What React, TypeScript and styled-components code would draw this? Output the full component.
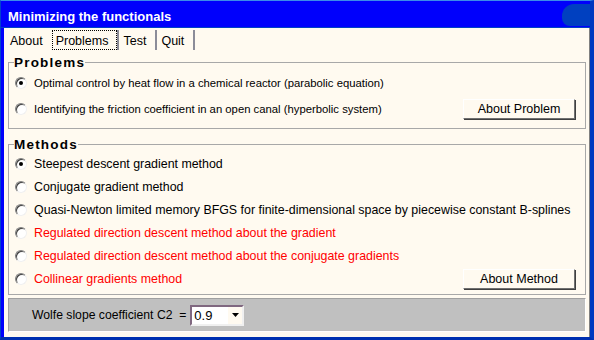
import styled, { createGlobalStyle } from 'styled-components'

const GlobalStyle = createGlobalStyle`
    body {
        margin: 0;
        font-family: "Liberation Sans", Arial, sans-serif;
        font-size: 12px;
    }
`

const problems = [
    { text: 'Optimal control by heat flow in a chemical reactor (parabolic equation)', checked: true },
    { text: 'Identifying the friction coefficient in an open canal (hyperbolic system)', checked: false },
]

const methods = [
    { text: 'Steepest descent gradient method', checked: true, red: false },
    { text: 'Conjugate gradient method', checked: false, red: false },
    { text: 'Quasi-Newton limited memory BFGS for finite-dimensional space by piecewise constant B-splines', checked: false, red: false },
    { text: 'Regulated direction descent method about the gradient', checked: false, red: true },
    { text: 'Regulated direction descent method about the conjugate gradients', checked: false, red: true },
    { text: 'Collinear gradients method', checked: false, red: true },
]

export default function App() {
    return (
        <>
            <GlobalStyle />
            <Window>
                <TitleBar>
                    <Title>Minimizing the functionals</Title>
                    <TitleCorner />
                </TitleBar>
                <Client>
                    <TabBar>
                        <Tab $first><TabLabel>About</TabLabel></Tab>
                        <Tab><TabLabel $active>Problems</TabLabel></Tab>
                        <Tab><TabLabel>Test</TabLabel></Tab>
                        <Tab><TabLabel>Quit</TabLabel></Tab>
                    </TabBar>

                    <Group $height={74}>
                        <Legend>Problems</Legend>
                        <Rows $gap={9.5} $size={11.3} $top={4}>
                            {problems.map((p, i) => (
                                <Row key={i}>
                                    <Radio $checked={p.checked} />
                                    <Label>{p.text}</Label>
                                    {i === problems.length - 1 && <Button>About Problem</Button>}
                                </Row>
                            ))}
                        </Rows>
                    </Group>

                    <Group $height={158}>
                        <Legend>Methods</Legend>
                        <Rows $gap={6.2} $size={12.4} $top={3}>
                            {methods.map((m, i) => (
                                <Row key={i}>
                                    <Radio $checked={m.checked} />
                                    <Label $red={m.red}>{m.text}</Label>
                                    {i === methods.length - 1 && <Button>About Method</Button>}
                                </Row>
                            ))}
                        </Rows>
                    </Group>

                    <Bottom>
                        <span>Wolfe slope coefficient C2&nbsp;&nbsp;=</span>
                        <Select>
                            <SelectValue>0.9</SelectValue>
                            <Arrow>
                                <svg width="7" height="4" viewBox="0 0 7 4">
                                    <path d="M0 0h7L3.5 4z" fill="#000" />
                                </svg>
                            </Arrow>
                        </Select>
                    </Bottom>
                </Client>
            </Window>
        </>
    )
}

const Window = styled.div`
    width: 594px;
    height: 340px;
    box-sizing: border-box;
    background: #0000fc;
    border-top: 1px solid #3c8ce8;
    border-left: 1px solid #0040d0;
    border-right: 4px solid #0038c0;
    border-bottom: 3px solid #0030b0;
    display: flex;
    flex-direction: column;
    overflow: hidden;
`

const TitleBar = styled.div`
    height: 27px;
    flex-shrink: 0;
    display: flex;
    align-items: center;
    justify-content: space-between;
    border-bottom: 1px solid #0040c8;
    box-sizing: border-box;
    padding-left: 7px;
`

const Title = styled.div`
    color: #fff;
    font-family: "Liberation Sans", Arial, sans-serif;
    font-weight: bold;
    font-size: 13px;
    padding-top: 4px;
`

const TitleCorner = styled.div`
    width: 28px;
    height: 22px;
    background: #0040c0;
    border-radius: 12px 0 0 8px;
    margin-top: 2px;
`

const Client = styled.div`
    flex: 1;
    margin-left: 3px;
    background: #fffaf0;
    border-right: 1px solid #808080;
    padding: 2px 3px 3px 4px;
    display: flex;
    flex-direction: column;
`

const TabBar = styled.div`
    display: flex;
    height: 20px;
    flex-shrink: 0;
    padding-left: 2px;
    margin: 0 -3px 5px -4px;
`

const Tab = styled.div<{ $first?: boolean }>`
    display: flex;
    align-items: stretch;
    border-right: 2px solid ${p => p.$first ? 'transparent' : '#8c8c98'};
    margin-right: ${p => p.$first ? -2 : 0}px;
`

const TabLabel = styled.span<{ $active?: boolean }>`
    display: flex;
    align-items: center;
    padding: 1px 8px 0 3px;
    border: 1px ${p => p.$active ? 'dotted #000' : 'solid transparent'};
    font-size: 12.5px;
`

const Group = styled.fieldset<{ $height: number }>`
    margin: 0 0 8px 0;
    padding: 0 0 0 6px;
    height: ${p => p.$height}px;
    flex-shrink: 0;
    box-sizing: border-box;
    border: 1px solid #a8a8a8;
`

const Legend = styled.legend`
    font-weight: bold;
    font-size: 13.5px;
    letter-spacing: 1.2px;
    padding: 0;
    margin-left: -1px;
`

const Rows = styled.div<{ $gap: number; $size: number; $top: number }>`
    display: flex;
    flex-direction: column;
    gap: ${p => p.$gap}px;
    padding-top: ${p => p.$top}px;
    font-size: ${p => p.$size}px;
`

const Row = styled.div`
    display: flex;
    align-items: center;
    height: 17px;
`

const Radio = styled.span<{ $checked: boolean }>`
    width: 10px;
    height: 10px;
    border-radius: 50%;
    background: #fff;
    border: 1px solid;
    border-color: #808080 #f0f0f0 #f0f0f0 #808080;
    box-shadow: inset 1px 1px 0 #404040;
    margin-right: 7px;
    display: flex;
    align-items: center;
    justify-content: center;
    flex-shrink: 0;

    &::after {
        content: '';
        width: 4px;
        height: 4px;
        border-radius: 50%;
        background: ${p => p.$checked ? '#000' : 'transparent'};
    }
`

const Label = styled.span<{ $red?: boolean }>`
    color: ${p => p.$red ? '#ff0000' : '#000'};
    white-space: nowrap;
`

const Button = styled.div`
    margin-left: auto;
    margin-right: 10px;
    width: 112px;
    height: 20px;
    box-sizing: border-box;
    background: #fffaf0;
    border: 1px solid;
    border-color: #ffffff #707070 #707070 #ffffff;
    box-shadow: 1px 1px 0 #404040;
    display: flex;
    align-items: center;
    justify-content: center;
    font-size: 12.5px;
`

const Bottom = styled.div`
    background: #c0c0c0;
    height: 32px;
    flex-shrink: 0;
    border: 1px solid;
    border-color: #a0a0a0 #ffffff #ffffff #a0a0a0;
    display: flex;
    align-items: center;
    padding-left: 23px;
    gap: 4px;
    font-size: 12.2px;
    margin-top: -5px;
`

const Select = styled.div`
    width: 54px;
    height: 21px;
    box-sizing: border-box;
    background: #fff;
    border: 2px solid;
    border-color: #806880 #f0f0f0 #f0f0f0 #806880;
    display: flex;
    align-items: center;
    font-size: 13px;
`

const SelectValue = styled.span`
    flex: 1;
    padding-left: 2px;
`

const Arrow = styled.span`
    width: 14px;
    height: 17px;
    background: #fffaf0;
    display: flex;
    align-items: center;
    justify-content: center;
`
